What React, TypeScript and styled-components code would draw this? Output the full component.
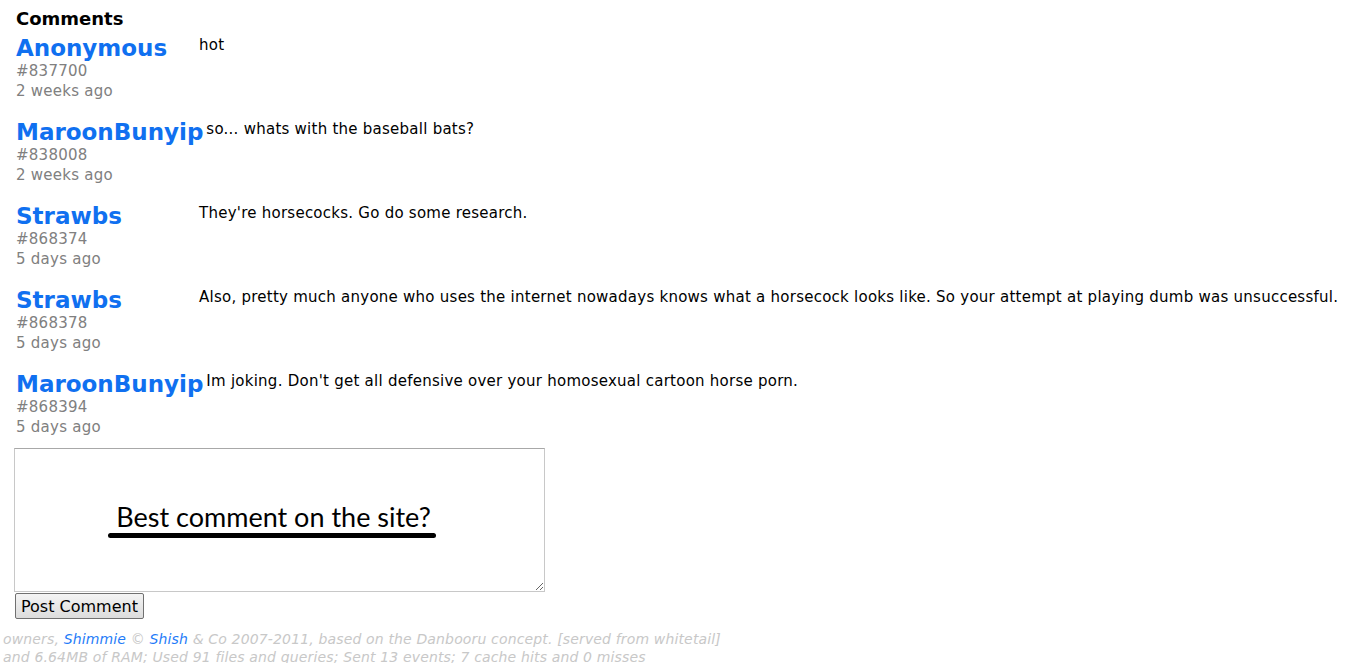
import React from "react";
import styled, { createGlobalStyle } from "styled-components";

const Global = createGlobalStyle`
  html, body { margin: 0; padding: 0; background: #fff; }
  body { font-family: "DejaVu Sans", Verdana, sans-serif; color: #000; }
`;

const Page = styled.div`
  padding: 0 3px;
  width: 1346px;
  box-sizing: border-box;
`;

const Main = styled.div`
  padding: 8px 0 0 13px;
`;

const Heading = styled.h3`
  margin: 0 0 5px 0;
  font-size: 18px;
  line-height: 22px;
  font-weight: bold;
`;

const List = styled.div`
  display: flex;
  flex-direction: column;
`;

const CommentRow = styled.div`
  display: flex;
  align-items: flex-start;
  margin-bottom: 18px;
  &:last-child {
    margin-bottom: 11px;
  }
`;

const Info = styled.div`
  min-width: 180px;
  margin-right: 3px;
  flex-shrink: 0;
`;

const Name = styled.a`
  display: block;
  font-size: 23px;
  line-height: 26px;
  font-weight: bold;
  color: #1070f0;
  text-decoration: none;
`;

const Meta = styled.div`
  font-size: 15px;
  letter-spacing: 0.25px;
  line-height: 20px;
  color: #808080;
`;

const Body = styled.div`
  font-size: 15px;
  letter-spacing: 0.25px;
  line-height: 20px;
  white-space: nowrap;
`;

const Form = styled.div`
  display: flex;
  flex-direction: column;
  align-items: flex-start;
  margin-left: -2px;
`;

const TextBox = styled.div`
  width: 529px;
  height: 142px;
  border: 1px solid #c8c8c8;
  border-top-color: #a8a8a8;
  background: #fff;
  resize: both;
  overflow: hidden;
  display: flex;
  flex-direction: column;
  align-items: center;
  justify-content: center;
`;

const Meme = styled.div`
  display: flex;
  flex-direction: column;
  align-items: center;
  margin-left: -16px;
`;

const MemeText = styled.span`
  font-family: Lato, "Open Sans", sans-serif;
  font-size: 27px;
  line-height: 30px;
  color: #000;
  margin-left: 4px;
`;

const MemeLine = styled.div`
  width: 328px;
  height: 5px;
  border-radius: 3px;
  background: #000;
  margin-top: 1px;
`;

const Button = styled.button`
  margin: 1px 0 0 1px;
  font-family: "DejaVu Sans", Verdana, sans-serif;
  font-size: 16px;
  letter-spacing: 0;
  line-height: 19px;
  padding: 3px 5px 2px 5px;
  border: 1px solid #707070;
  border-radius: 2px;
  background: linear-gradient(#f4f4f4, #dcdcdc);
  color: #000;
`;

const Footer = styled.div`
  margin-top: 11px;
  font-size: 14px;
  letter-spacing: 0.15px;
  line-height: 18px;
  font-style: italic;
  color: #c8c8c8;
`;

const FootLink = styled.a`
  color: #1f7cf8;
  text-decoration: none;
`;

const comments = [
  { name: "Anonymous", id: "#837700", time: "2 weeks ago", text: "hot" },
  { name: "MaroonBunyip", id: "#838008", time: "2 weeks ago", text: "so... whats with the baseball bats?" },
  { name: "Strawbs", id: "#868374", time: "5 days ago", text: "They're horsecocks. Go do some research." },
  {
    name: "Strawbs",
    id: "#868378",
    time: "5 days ago",
    text: "Also, pretty much anyone who uses the internet nowadays knows what a horsecock looks like. So your attempt at playing dumb was unsuccessful.",
  },
  {
    name: "MaroonBunyip",
    id: "#868394",
    time: "5 days ago",
    text: "Im joking. Don't get all defensive over your homosexual cartoon horse porn.",
  },
];

export default function App() {
  return (
    <Page>
      <Global />
      <Main>
        <Heading>Comments</Heading>
        <List>
          {comments.map((c, i) => (
            <CommentRow key={i}>
              <Info>
                <Name href="#">{c.name}</Name>
                <Meta>{c.id}</Meta>
                <Meta>{c.time}</Meta>
              </Info>
              <Body>{c.text}</Body>
            </CommentRow>
          ))}
        </List>
        <Form>
          <TextBox>
            <Meme>
              <MemeText>Best comment on the site?</MemeText>
              <MemeLine />
            </Meme>
          </TextBox>
          <Button>Post Comment</Button>
        </Form>
      </Main>
      <Footer>
        owners, <FootLink href="#">Shimmie</FootLink> © <FootLink href="#">Shish</FootLink> &amp; Co 2007-2011, based on the
        Danbooru concept. [served from whitetail]
        <br />
        and 6.64MB of RAM; Used 91 files and queries; Sent 13 events; 7 cache hits and 0 misses
      </Footer>
    </Page>
  );
}
